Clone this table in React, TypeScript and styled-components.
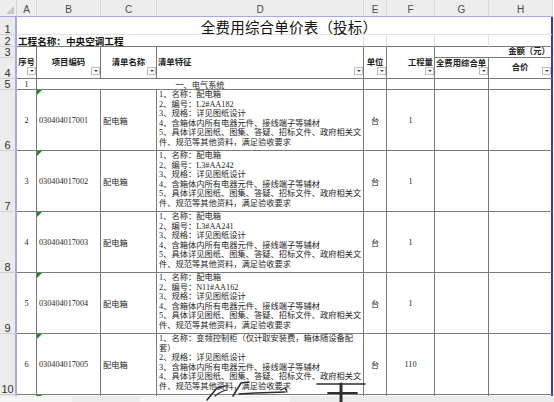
import React from "react";
import styled, { createGlobalStyle, css } from "styled-components";

const Global = createGlobalStyle`
  html, body { margin: 0; padding: 0; background: #fff; }
  body {
    width: 554px; height: 402px; overflow: hidden;
    font-family: "Liberation Serif", "Noto Sans CJK SC", serif;
    color: #1e1e1e;
  }
`;

const GRID = "#7a7a7a";
const FAINT = "#e2e2e2";
const BLUE = "#3434d4";
const LAV = "#a7a7e6";

type Pos = { $c: number; $r: number; $cs?: number; $rs?: number };

const place = css<Pos>`
  grid-column: ${(p) => p.$c} / span ${(p) => p.$cs ?? 1};
  grid-row: ${(p) => p.$r} / span ${(p) => p.$rs ?? 1};
`;

const Page = styled.div`
  position: relative;
  display: flex;
  flex-direction: column;
  width: 554px;
  height: 402px;
  overflow: hidden;
`;

const Sheet = styled.div`
  flex: none;
  display: grid;
  grid-template-columns: 17px 20px 64px 56px 207px 23px 48px 54px 64px;
  grid-template-rows: 17px 18px 12px 11px 21px 11px repeat(6, 61px);
  height: 396px;
  overflow: hidden;
`;

const Corner = styled.div<Pos>`
  ${place};
  position: relative;
  background: #ededed;
  border-bottom: 1px solid ${LAV};
  border-right: 1px solid #d4d4d4;
  &::after {
    content: "";
    position: absolute;
    right: 2px;
    bottom: 2px;
    border-left: 8px solid transparent;
    border-bottom: 8px solid #c6c6c6;
  }
`;

const ColHead = styled.div<Pos>`
  ${place};
  box-sizing: border-box;
  background: #ededed;
  border-right: 1px solid #dadada;
  border-bottom: 1px solid ${LAV};
  font: 10px "Liberation Sans", Arial, sans-serif;
  color: #4a4a4a;
  text-align: center;
  padding-top: 4px;
`;

const RowHead = styled.div<Pos>`
  ${place};
  box-sizing: border-box;
  background: #ececec;
  border-right: 2px solid ${LAV};
  border-bottom: 1px solid #d2d2d2;
  font: 11px "Liberation Sans", Arial, sans-serif;
  color: #333;
  display: flex;
  align-items: flex-end;
  justify-content: center;
  padding-bottom: 0;
  line-height: 9px;
`;

const TitleCell = styled.div<Pos>`
  ${place};
  box-sizing: border-box;
  border-right: 2px solid ${BLUE};
  border-bottom: 1px solid ${FAINT};
  font: 400 14.5px "Noto Sans CJK SC", serif;
  color: #111;
  display: flex;
  align-items: center;
  justify-content: center;
  padding-left: 10px;
  padding-top: 1px;
  letter-spacing: 0.2px;
`;

const ProjectCell = styled.div<Pos>`
  ${place};
  box-sizing: border-box;
  border-right: 1px solid ${FAINT};
  border-bottom: 1px solid ${GRID};
  font: 700 9.6px "Noto Sans CJK SC", sans-serif;
  color: #111;
  display: flex;
  align-items: center;
  padding-left: 1px;
  white-space: nowrap;
`;

const BlankCell = styled.div<Pos & { $last?: boolean }>`
  ${place};
  box-sizing: border-box;
  border-right: ${(p) => (p.$last ? `2px solid ${BLUE}` : `1px solid ${FAINT}`)};
  border-bottom: 1px solid ${GRID};
`;

const HeadCell = styled.div<
  Pos & { $align?: "left" | "center" | "right"; $valign?: "top" | "center"; $last?: boolean }
>`
  ${place};
  position: relative;
  box-sizing: border-box;
  border-right: ${(p) => (p.$last ? `2px solid ${BLUE}` : `1px solid ${GRID}`)};
  border-bottom: 1px solid ${GRID};
  font: 700 8.4px "Liberation Serif", "Noto Sans CJK SC", serif;
  color: #222;
  display: flex;
  align-items: ${(p) => (p.$valign === "top" ? "flex-start" : "center")};
  justify-content: ${(p) =>
    p.$align === "left" ? "flex-start" : p.$align === "right" ? "flex-end" : "center"};
  padding: ${(p) => (p.$valign === "top" ? "1px 1px 0 1px" : "0 1px")};
  white-space: nowrap;
  overflow: hidden;
  line-height: 10px;
`;

const Filter = styled.span`
  position: absolute;
  right: 0;
  bottom: 3px;
  box-sizing: border-box;
  width: 9px;
  height: 8px;
  background: #fff;
  border: 1px solid #bdbdbd;
  &::after {
    content: "";
    position: absolute;
    left: 2px;
    top: 2px;
    border-left: 2px solid transparent;
    border-right: 2px solid transparent;
    border-top: 2px solid #444;
  }
`;

const BodyCell = styled.div<
  Pos & { $align?: "left" | "center"; $last?: boolean; $flag?: boolean }
>`
  ${place};
  position: relative;
  box-sizing: border-box;
  border-right: ${(p) => (p.$last ? `2px solid ${BLUE}` : `1px solid ${GRID}`)};
  border-bottom: 1px solid ${GRID};
  font: 400 8.2px "Liberation Serif", "Noto Sans CJK SC", serif;
  color: #262626;
  display: flex;
  align-items: center;
  justify-content: ${(p) => (p.$align === "left" ? "flex-start" : "center")};
  padding: 0 2px;
  white-space: nowrap;
  overflow: hidden;
  ${(p) =>
    p.$flag &&
    css`
      &::before {
        content: "";
        position: absolute;
        left: 0;
        top: 0;
        border-top: 5px solid #1c8c1c;
        border-right: 5px solid transparent;
      }
    `}
`;

const FeatureCell = styled.div<Pos>`
  ${place};
  box-sizing: border-box;
  border-right: 1px solid ${GRID};
  border-bottom: 1px solid ${GRID};
  font: 400 8.25px "Liberation Serif", "Noto Sans CJK SC", serif;
  color: #262626;
  display: flex;
  flex-direction: column;
  padding: 0 0 0 2px;
  line-height: 9.6px;
  overflow: hidden;
`;

const Line = styled.span`
  white-space: nowrap;
`;

const BottomBar = styled.div`
  flex: 1;
  display: flex;
  gap: 68px;
  background: #ececec;
  padding: 1px 0 0 0;
`;

const Tab = styled.div<{ $w: number }>`
  width: ${(p) => p.$w}px;
  background: #f7f7f7;
  border-radius: 3px 3px 0 0;
`;

const Scribble = styled.svg`
  position: absolute;
  left: 195px;
  top: 376px;
  pointer-events: none;
`;

type Item = { n: number; code: string; lines: string[]; qty: string };

const std = (id: string) => [
  "1、名称：配电箱",
  `2、编号：${id}`,
  "3、规格：详见图纸设计",
  "4、含箱体内所有电器元件、接线端子等辅材",
  "5、具体详见图纸、图集、答疑、招标文件、政府相关文",
  "件、规范等其他资料，满足验收要求",
];

const items: Item[] = [
  { n: 2, code: "030404017001", lines: std("L2#AA182"), qty: "1" },
  { n: 3, code: "030404017002", lines: std("L3#AA242"), qty: "1" },
  { n: 4, code: "030404017003", lines: std("L3#AA241"), qty: "1" },
  { n: 5, code: "030404017004", lines: std("N11#AA162"), qty: "1" },
  {
    n: 6,
    code: "030404017005",
    lines: [
      "1、名称：变频控制柜（仅计取安装费，箱体随设备配",
      "套）",
      "2、规格：详见图纸设计",
      "3、含箱体内所有电器元件、接线端子等辅材",
      "4、具体详见图纸、图集、答疑、招标文件、政府相关文",
      "件、规范等其他资料，满足验收要求",
    ],
    qty: "110",
  },
];

const letters = ["A", "B", "C", "D", "E", "F", "G", "H"];

export default function App() {
  return (
    <Page>
      <Global />
      <Sheet>
        <Corner $c={1} $r={1} />
        {letters.map((l, i) => (
          <ColHead key={l} $c={i + 2} $r={1}>
            {l}
          </ColHead>
        ))}

        <RowHead $c={1} $r={2}>1</RowHead>
        <TitleCell $c={2} $r={2} $cs={8}>
          全费用综合单价表（投标）
        </TitleCell>

        <RowHead $c={1} $r={3}>2</RowHead>
        <ProjectCell $c={2} $r={3} $cs={4}>
          工程名称：中央空调工程
        </ProjectCell>
        <BlankCell $c={6} $r={3} />
        <BlankCell $c={7} $r={3} />
        <BlankCell $c={8} $r={3} />
        <BlankCell $c={9} $r={3} $last />

        <RowHead $c={1} $r={4}>3</RowHead>
        <RowHead $c={1} $r={5}>4</RowHead>
        <HeadCell $c={2} $r={4} $rs={2}>
          序号
          <Filter />
        </HeadCell>
        <HeadCell $c={3} $r={4} $rs={2}>
          项目编码
          <Filter />
        </HeadCell>
        <HeadCell $c={4} $r={4} $rs={2}>
          清单名称
          <Filter />
        </HeadCell>
        <HeadCell $c={5} $r={4} $rs={2} $align="left">
          清单特征
          <Filter />
        </HeadCell>
        <HeadCell $c={6} $r={4} $rs={2}>
          单位
          <Filter />
        </HeadCell>
        <HeadCell $c={7} $r={4} $rs={2} $align="right">
          工程量
          <Filter />
        </HeadCell>
        <HeadCell $c={8} $r={4} $cs={2} $align="right" $last>
          金额（元）
        </HeadCell>
        <HeadCell $c={8} $r={5} $align="left" $valign="top">
          全费用综合单
          <Filter />
        </HeadCell>
        <HeadCell $c={9} $r={5} $last>
          合价
          <Filter />
        </HeadCell>

        <RowHead $c={1} $r={6}>5</RowHead>
        <BodyCell $c={2} $r={6}>1</BodyCell>
        <BodyCell $c={3} $r={6} $cs={3}>
          一、电气系统
        </BodyCell>
        <BodyCell $c={6} $r={6} />
        <BodyCell $c={7} $r={6} />
        <BodyCell $c={8} $r={6} />
        <BodyCell $c={9} $r={6} $last />

        {items.map((it, i) => {
          const r = 7 + i;
          return (
            <React.Fragment key={it.code}>
              <RowHead $c={1} $r={r}>{r - 1}</RowHead>
              <BodyCell $c={2} $r={r}>{it.n}</BodyCell>
              <BodyCell $c={3} $r={r} $align="left" $flag>
                {it.code}
              </BodyCell>
              <BodyCell $c={4} $r={r} $align="left">
                配电箱
              </BodyCell>
              <FeatureCell $c={5} $r={r}>
                {it.lines.map((l, k) => (
                  <Line key={k}>{l}</Line>
                ))}
              </FeatureCell>
              <BodyCell $c={6} $r={r}>台</BodyCell>
              <BodyCell $c={7} $r={r}>{it.qty}</BodyCell>
              <BodyCell $c={8} $r={r} />
              <BodyCell $c={9} $r={r} $last />
            </React.Fragment>
          );
        })}

        <RowHead $c={1} $r={12} />
        <BodyCell $c={2} $r={12} />
        <BodyCell $c={3} $r={12} $flag />
        <BodyCell $c={4} $r={12} />
        <BodyCell $c={5} $r={12} />
        <BodyCell $c={6} $r={12} />
        <BodyCell $c={7} $r={12} />
        <BodyCell $c={8} $r={12} />
        <BodyCell $c={9} $r={12} $last />
      </Sheet>
      <BottomBar>
        <Tab $w={72} />
        <Tab $w={150} />
      </BottomBar>
      <Scribble width="180" height="26" viewBox="0 0 180 26">
        <g stroke="#2e2e2e" fill="none" strokeLinecap="round">
          <path d="M12 24 L22 12 L30 10" strokeWidth="1.6" />
          <path d="M20 20 Q26 15 32 14" strokeWidth="1.2" />
          <path d="M38 20 L46 7 L54 6" strokeWidth="1.6" />
          <path d="M44 18 L60 17 L90 16" strokeWidth="1.4" />
          <path d="M86 14 L90 12 L92 16" strokeWidth="1.3" />
          <path d="M122 8 L170 8" strokeWidth="1.6" />
          <path d="M133 17 L162 17" strokeWidth="1.8" />
          <path d="M146 8 L146 26" strokeWidth="3" />
        </g>
      </Scribble>
    </Page>
  );
}
